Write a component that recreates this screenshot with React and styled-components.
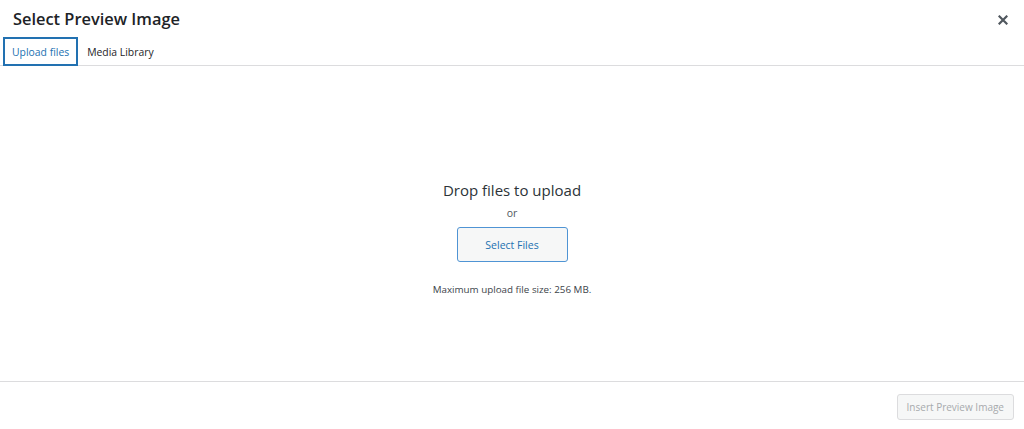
import React from 'react'
import styled, { createGlobalStyle } from 'styled-components'

const Global = createGlobalStyle`
  html, body { margin: 0; padding: 0; background: #fff; }
  body { font-family: "Open Sans", "Noto Sans", sans-serif; color: #1d2327; }
  * { box-sizing: border-box; }
`

const Modal = styled.div`
  width: 1024px;
  height: 429px;
  display: flex;
  flex-direction: column;
  background: #fff;
`

const Header = styled.div`
  height: 37px;
  display: flex;
  align-items: center;
  justify-content: space-between;
  padding: 0 13px 0 13px;
`

const Title = styled.h1`
  margin: 0;
  font-size: 16.4px;
  font-weight: 600;
  color: #1d2327;
`

const Close = styled.button`
  border: 0;
  background: none;
  padding: 0;
  width: 16px;
  height: 16px;
  display: flex;
  align-items: center;
  justify-content: center;
  cursor: pointer;
  margin-top: 2px;
`

const Tabs = styled.div`
  display: flex;
  height: 29px;
  padding-left: 3px;
  border-bottom: 1px solid #dcdcde;
`

const Tab = styled.button`
  height: 29px;
  padding: 0 7px;
  border: ${p => (p.$active ? '2px solid #2271b1' : '2px solid transparent')};
  background: none;
  font-family: inherit;
  font-size: 10.4px;
  color: ${p => (p.$active ? '#2271b1' : '#1d2327')};
  cursor: pointer;
`

const Content = styled.div`
  flex: 1;
  display: flex;
  flex-direction: column;
  align-items: center;
  padding-top: 113px;
  border-bottom: 1px solid #dcdcde;
`

const Drop = styled.div`
  font-size: 15px;
  color: #2c3338;
  line-height: 22px;
`

const Or = styled.div`
  font-size: 10.5px;
  color: #50575e;
  margin-top: 5px;
  line-height: 14px;
`

const SelectBtn = styled.button`
  margin-top: 7px;
  width: 111px;
  height: 35px;
  border: 1px solid #4f94d4;
  border-radius: 3px;
  background: #f6f7f7;
  color: #2271b1;
  font-family: inherit;
  font-size: 10.5px;
  cursor: pointer;
`

const Limit = styled.div`
  margin-top: 21px;
  font-size: 9.8px;
  color: #3c434a;
`

const Footer = styled.div`
  height: 47px;
  display: flex;
  align-items: center;
  justify-content: flex-end;
  padding-right: 10px;
`

const InsertBtn = styled.button`
  height: 26px;
  padding: 0 9px;
  border: 1px solid #dcdcde;
  border-radius: 3px;
  background: #f6f7f7;
  color: #a7aaad;
  font-family: inherit;
  font-size: 10px;
  margin-top: 3px;
`

export default function App() {
  return (
    <>
      <Global />
      <Modal>
        <Header>
          <Title>Select Preview Image</Title>
          <Close aria-label="Close">
            <svg width="10" height="10" viewBox="0 0 10 10">
              <path d="M1.5 1.5l7 7M8.5 1.5l-7 7" stroke="#50575e" strokeWidth="2.2" strokeLinecap="square" />
            </svg>
          </Close>
        </Header>
        <Tabs>
          <Tab $active>Upload files</Tab>
          <Tab>Media Library</Tab>
        </Tabs>
        <Content>
          <Drop>Drop files to upload</Drop>
          <Or>or</Or>
          <SelectBtn>Select Files</SelectBtn>
          <Limit>Maximum upload file size: 256 MB.</Limit>
        </Content>
        <Footer>
          <InsertBtn disabled>Insert Preview Image</InsertBtn>
        </Footer>
      </Modal>
    </>
  )
}
